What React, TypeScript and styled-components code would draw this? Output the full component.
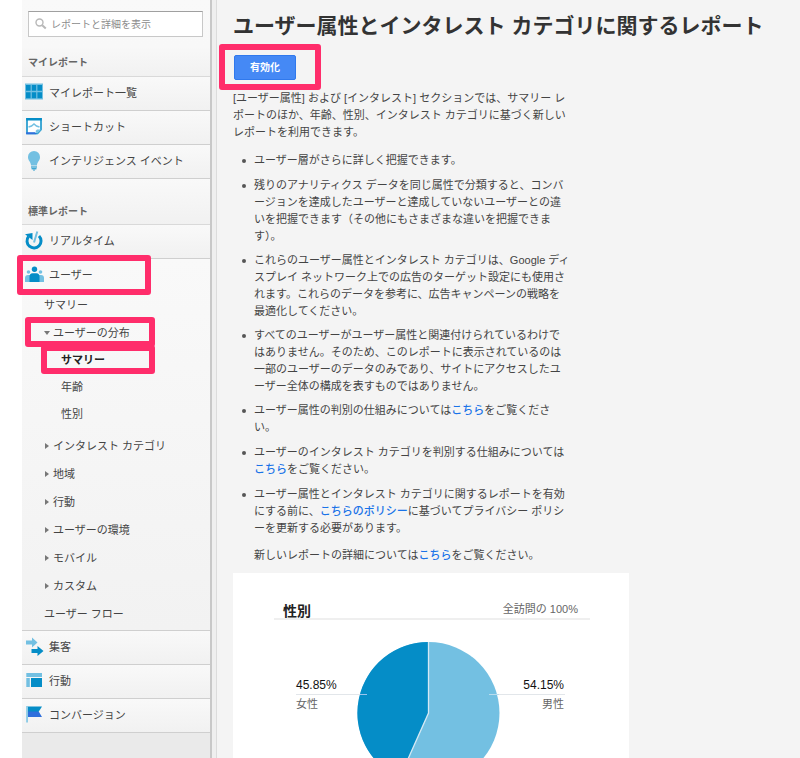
import React from "react";
import styled, { createGlobalStyle, css } from "styled-components";

const PINK = "#ff2d6b";
const BLUE = "#058dc7";
const SKY = "#73c0e2";

const GlobalStyle = createGlobalStyle`
  *, *::before, *::after { box-sizing: border-box; }
  body {
    margin: 0;
    background: #fff;
    color: #444;
    font: 11px/17px "Liberation Sans", "Noto Sans CJK JP", sans-serif;
  }
  ul, p, h1, h2 { margin: 0; padding: 0; }
  ul { list-style: none; }
`;

const Page = styled.div`
  display: flex;
  height: 100vh;
  overflow: hidden;
  padding-left: 22px;
`;

const Sidebar = styled.nav`
  flex: 0 0 188px;
  background: #eaeaea;
`;

const Divider = styled.div`
  flex: 0 0 7px;
  background: #efefef;
  border-left: 2px solid #c8c8c8;
  border-right: 1px solid #dcdcdc;
`;

const Main = styled.main`
  flex: 1;
  min-width: 0;
  padding: 11px 16px 0;
  background: #f4f4f4;
  overflow-y: auto;
  scrollbar-width: none;
`;

const SidebarTop = styled.div`
  padding-top: 11px;
  background: linear-gradient(#f9f9f9, #f8f8f8 60%, #f1f1f1);
`;

const SearchBox = styled.label`
  display: flex;
  align-items: center;
  gap: 4px;
  height: 26px;
  margin: 0 7px 0 6px;
  padding-left: 6px;
  background: #fff;
  border: 1px solid #c8c8c8;
  border-top-color: #a0a0a0;
`;

const SearchInput = styled.input`
  flex: 1;
  min-width: 0;
  padding: 0;
  border: 0;
  outline: 0;
  background: transparent;
  font: inherit;
  font-size: 10px;
  color: #444;
  &::placeholder { color: #8c8c8c; opacity: 1; }
`;

const GroupTitle = styled.h2<{ $spaced?: boolean }>`
  height: ${(p) => (p.$spaced ? 46 : 40)}px;
  padding: ${(p) => (p.$spaced ? 24 : 17)}px 6px 0;
  border-bottom: 1px solid #d9d9d9;
  background: ${(p) => (p.$spaced ? "linear-gradient(#f9f9f9, #f1f1f1)" : "none")};
  font-size: 10px;
  font-weight: bold;
  color: #666;
`;

const Row = styled.a<{ $open?: boolean }>`
  display: flex;
  align-items: flex-start;
  gap: 5px;
  height: ${(p) => (p.$open ? 32 : 34)}px;
  padding: 5px 0 0 3px;
  color: #444;
  line-height: 22px;
  text-decoration: none;
  position: relative;
  ${(p) =>
    !p.$open &&
    css`
      background: linear-gradient(#f9f9f9, #f1f1f1);
      border-bottom: 1px solid #cfcfcf;
    `}
  svg { flex: none; margin-top: 1px; }
`;

const OpenSection = styled.div`
  padding-bottom: 2px;
  background: linear-gradient(#f9f9f9, #f2f2f2);
  border-bottom: 1px solid #cfcfcf;
`;

const Item = styled.a<{ $nested?: boolean; $current?: boolean }>`
  display: flex;
  align-items: center;
  gap: 3px;
  position: relative;
  height: ${(p) => (p.$nested ? 27 : 28)}px;
  padding-left: ${(p) => (p.$nested ? 39 : 22)}px;
  color: ${(p) => (p.$current ? "#222" : "#444")};
  font-weight: ${(p) => (p.$current ? "bold" : "normal")};
  text-decoration: none;
`;

const NestedList = styled.ul`
  padding-bottom: 4px;
`;

const Highlight = styled.span<{ $place: "row" | "item" | "nested" | "button" }>`
  position: absolute;
  border: 6px solid ${PINK};
  border-radius: 3px;
  pointer-events: none;
  ${(p) =>
    ({
      row: "left: -5px; top: -4px; width: 134px; height: 40px;",
      item: "left: 3px; top: -2px; width: 130px; height: 30px;",
      nested: "left: 19px; top: -2px; width: 114px; height: 29px;",
      button: "left: -15px; top: -11px; width: 102px; height: 46px;",
    })[p.$place]}
`;

const Title = styled.h1`
  font-size: 21px;
  line-height: 30px;
  font-weight: bold;
  color: #333;
`;

const ButtonWrap = styled.div`
  position: relative;
  width: fit-content;
  margin: 14px 0 10px 1px;
`;

const EnableButton = styled.button`
  display: block;
  height: 25px;
  padding: 0 15px;
  border: 1px solid #3079ed;
  border-radius: 2px;
  background: #4589f5;
  color: #fff;
  font: bold 10px/22px "Liberation Sans", "Noto Sans CJK JP", sans-serif;
`;

const Prose = styled.div`
  max-width: 338px;
`;

const Bullets = styled.ul`
  margin-top: 11px;
  padding-left: 21px;
`;

const Bullet = styled.li<{ $long?: boolean }>`
  position: relative;
  margin-bottom: ${(p) => (p.$long ? 7 : 8)}px;
  &::before {
    content: "";
    position: absolute;
    left: -12px;
    top: 7px;
    width: 4px;
    height: 4px;
    border-radius: 50%;
    background: #555;
  }
`;

const Footnote = styled.p`
  padding: 2px 0 0 21px;
`;

const Link = styled.a`
  color: #1a73e8;
  font-weight: 500;
  text-decoration: none;
`;

const Card = styled.section`
  max-width: 396px;
  margin-top: 9px;
  padding: 30px 39px 20px 41px;
  background: #fff;
`;

const CardHead = styled.header`
  display: flex;
  justify-content: space-between;
  align-items: flex-end;
  height: 17px;
  padding: 0 12px 0 9px;
  border-bottom: 2px solid #efefef;
  color: #666;
`;

const CardTitle = styled.h2`
  font-size: 14px;
  line-height: 13px;
  font-weight: bold;
  color: #222;
`;

const CardMeta = styled.span`
  line-height: 17px;
`;

const Chart = styled.svg`
  display: block;
  width: 100%;
`;

const GridIcon = () => (
  <svg width="19" height="18" viewBox="0 0 19 18">
    <rect y="0.500" width="18" height="16" fill={SKY} />
    <path fill={BLUE} d="M1 2h4.6v5.700H1zM6.8 2h4.4v5.700H6.8zM12.4 2H17v5.700h-4.6zM1 9.300h4.6v6H1zM6.8 9.300h4.4v6H6.8zM12.4 9.300H17v6h-4.6z" />
  </svg>
);

const ShortcutIcon = () => (
  <svg width="19" height="18" viewBox="0 0 19 18">
    <path fill="#fff" stroke={BLUE} strokeWidth="1.5" d="M2 1.800h14v11L12.500 16.500H2z" />
    <path fill={BLUE} d="M1.200 1h15.600v2.500H1.200z" />
    <path fill="none" stroke={SKY} strokeWidth="1.5" d="M3.500 10 6.500 9 9 7l2.500 2 3 1" />
    <path fill="#2f6fdc" d="M1.200 15.200H10l1.500 2H1.200z" />
    <path fill={SKY} d="m10.500 14 1.500-1.500h4.500l-4.500 4.500z" />
  </svg>
);

const BulbIcon = () => (
  <svg width="19" height="21" viewBox="0 0 19 21">
    <path fill={SKY} d="M9 0a6 6 0 0 0-6 6.200c0 3.400 3 4.600 3 8.300h6c0-3.700 3-4.900 3-8.300A6 6 0 0 0 9 0z" />
    <path fill={BLUE} d="M6 15.500h6v1H6zM6.500 17.300h5v1h-5zM7.500 18.800h3l-1.500 1z" />
  </svg>
);

const RealtimeIcon = () => (
  <svg width="19" height="20" viewBox="0 0 19 20">
    <path fill="none" stroke={BLUE} strokeWidth="3" d="M3.600 5.500A7 7 0 1 0 14 5" />
    <path fill={BLUE} d="M0 3.200 7.500 2v7z" />
    <path stroke={SKY} strokeWidth="2" d="M9 11.500 12.300 0.500" />
  </svg>
);

const UsersIcon = () => (
  <svg width="19" height="18" viewBox="0 0 19 18">
    <g fill={SKY}>
      <circle cx="3.500" cy="7" r="1.800" />
      <circle cx="15.500" cy="7" r="1.800" />
      <path d="M0 17v-4c0-2 1-3 3-3h13c2 0 3 1 3 3v4z" />
    </g>
    <circle cx="9.500" cy="4.300" r="2.700" fill={BLUE} />
    <path fill={BLUE} d="M4.500 17v-5.500c0-2 1-3.300 3-3.300h4c2 0 3 1.300 3 3.300V17z" />
  </svg>
);

const AcquireIcon = () => (
  <svg width="19" height="20" viewBox="0 0 19 20">
    <path fill={SKY} d="M1 3.500h6V.500l5.500 5-5.500 5V7.500H1z" />
    <path fill={BLUE} d="M6.500 12h6V9l6 5-6 5v-3h-6z" />
  </svg>
);

const BehaviorIcon = () => (
  <svg width="19" height="18" viewBox="0 0 19 18">
    <path fill={SKY} d="M1.300 2h15.700v4H1.300zM1.300 7h3.500v9H1.300z" />
    <path fill={BLUE} d="M6 7h11v9H6z" />
  </svg>
);

const FlagIcon = () => (
  <svg width="19" height="18" viewBox="0 0 19 18">
    <path fill={SKY} d="M1.300 1h1.500v16.500H1.300z" />
    <path fill={BLUE} d="M3 1.500h14L13.500 7H3z" />
    <path fill="#2f6fdc" d="M3 6.500h10.700L17 12H3z" />
  </svg>
);

const SearchIcon = () => (
  <svg width="12" height="12" viewBox="0 0 12 12" fill="none" stroke="#b8b8b8">
    <circle cx="4.500" cy="4.500" r="3.500" strokeWidth="1.400" />
    <path strokeWidth="2" d="m7.200 7.200 3.600 3.300" />
  </svg>
);

const Caret = ({ open }: { open?: boolean }) => (
  <svg width="6" height="8" viewBox="0 0 6 8" fill="#777">
    <path d={open ? "M0 2h6L3 6z" : "M1 1v6l4-3z"} />
  </svg>
);

const branches = ["インタレスト カテゴリ", "地域", "行動", "ユーザーの環境", "モバイル", "カスタム"];

export default function App() {
  return (
    <>
      <GlobalStyle />
      <Page>
        <Sidebar>
          <SidebarTop>
            <SearchBox>
              <SearchIcon />
              <SearchInput type="text" aria-label="レポートと詳細を表示" placeholder="レポートと詳細を表示" />
            </SearchBox>
            <GroupTitle>マイレポート</GroupTitle>
          </SidebarTop>
          <Row href="#dashboards"><GridIcon />マイレポート一覧</Row>
          <Row href="#shortcuts"><ShortcutIcon />ショートカット</Row>
          <Row href="#intelligence"><BulbIcon />インテリジェンス イベント</Row>
          <GroupTitle $spaced>標準レポート</GroupTitle>
          <Row href="#realtime"><RealtimeIcon />リアルタイム</Row>
          <OpenSection>
            <Row href="#users" $open>
              <UsersIcon />ユーザー
              <Highlight $place="row" />
            </Row>
            <ul>
              <li><Item href="#summary">サマリー</Item></li>
              <li>
                <Item href="#demographics">
                  <Caret open />ユーザーの分布
                  <Highlight $place="item" />
                </Item>
                <NestedList>
                  <li>
                    <Item href="#demographics-summary" $nested $current>
                      サマリー
                      <Highlight $place="nested" />
                    </Item>
                  </li>
                  <li><Item href="#age" $nested>年齢</Item></li>
                  <li><Item href="#gender" $nested>性別</Item></li>
                </NestedList>
              </li>
              {branches.map((name) => (
                <li key={name}><Item href="#branch"><Caret />{name}</Item></li>
              ))}
              <li><Item href="#flow">ユーザー フロー</Item></li>
            </ul>
          </OpenSection>
          <Row href="#acquisition"><AcquireIcon />集客</Row>
          <Row href="#behavior"><BehaviorIcon />行動</Row>
          <Row href="#conversions"><FlagIcon />コンバージョン</Row>
        </Sidebar>
        <Divider />
        <Main>
          <Title>ユーザー属性とインタレスト カテゴリに関するレポート</Title>
          <ButtonWrap>
            <EnableButton type="button">有効化</EnableButton>
            <Highlight $place="button" />
          </ButtonWrap>
          <Prose>
            <p>[ユーザー属性] および [インタレスト] セクションでは、サマリー レポートのほか、年齢、性別、インタレスト カテゴリに基づく新しいレポートを利用できます。</p>
            <Bullets>
              <Bullet>ユーザー層がさらに詳しく把握できます。</Bullet>
              <Bullet $long>残りのアナリティクス データを同じ属性で分類すると、コンバージョンを達成したユーザーと達成していないユーザーとの違いを把握できます（その他にもさまざまな違いを把握できます）。</Bullet>
              <Bullet $long>これらのユーザー属性とインタレスト カテゴリは、Google ディスプレイ ネットワーク上での広告のターゲット設定にも使用されます。これらのデータを参考に、広告キャンペーンの戦略を最適化してください。</Bullet>
              <Bullet $long>すべてのユーザーがユーザー属性と関連付けられているわけではありません。そのため、このレポートに表示されているのは一部のユーザーのデータのみであり、サイトにアクセスしたユーザー全体の構成を表すものではありません。</Bullet>
              <Bullet>ユーザー属性の判別の仕組みについては<Link href="#how">こちら</Link>をご覧ください。</Bullet>
              <Bullet>ユーザーのインタレスト カテゴリを判別する仕組みについては<Link href="#interests">こちら</Link>をご覧ください。</Bullet>
              <Bullet>ユーザー属性とインタレスト カテゴリに関するレポートを有効にする前に、<Link href="#policy">こちらのポリシー</Link>に基づいてプライバシー ポリシーを更新する必要があります。</Bullet>
            </Bullets>
            <Footnote>新しいレポートの詳細については<Link href="#details">こちら</Link>をご覧ください。</Footnote>
          </Prose>
          <Card>
            <CardHead>
              <CardTitle>性別</CardTitle>
              <CardMeta>全訪問の 100%</CardMeta>
            </CardHead>
            <Chart viewBox="0 0 316 170" role="img" aria-label="性別の割合">
              <circle cx="154.500" cy="93" r="71" fill={SKY} />
              <path fill={BLUE} d="M154.500 93V22A71 71 0 0 0 125.600 157.900z" />
              <path fill="none" stroke="#d5e9f4" strokeWidth="1.300" d="M154.500 22v71l-28.900 64.900" />
              <path stroke="#e2e6ea" d="M22 74.500h64M225 74.500h66" />
              <path stroke="#9cc4ee" d="M86 74.500h7" />
              <path stroke="#b9dcee" d="M215 74.500h10" />
              <g fontSize="12" fill="#111">
                <text x="22" y="69">45.85%</text>
                <text x="290" y="69" textAnchor="end">54.15%</text>
              </g>
              <g fontSize="11" fill="#666">
                <text x="22" y="88">女性</text>
                <text x="290" y="88" textAnchor="end">男性</text>
              </g>
            </Chart>
          </Card>
        </Main>
      </Page>
    </>
  );
}
